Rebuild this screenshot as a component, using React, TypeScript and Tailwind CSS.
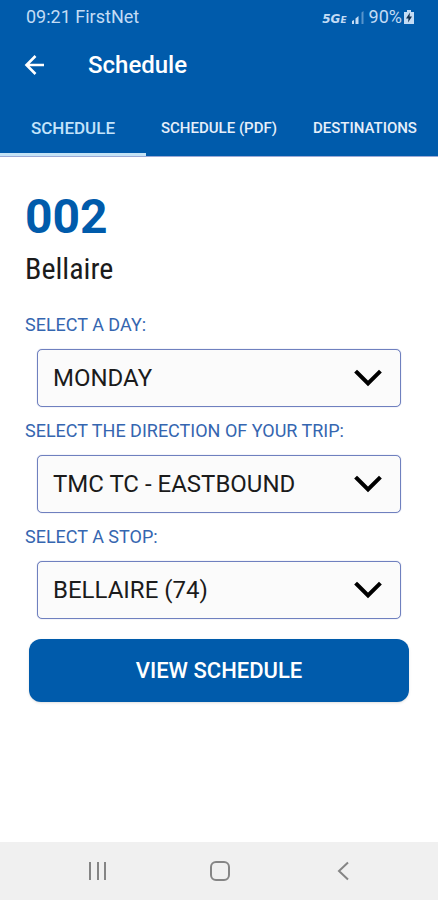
import React, { useState } from "react";

type Option = { value: string; label: string };

const TABS = [
  { id: "schedule", label: "SCHEDULE", className: "w-1/3 text-[17px]" },
  { id: "pdf", label: "SCHEDULE (PDF)", className: "w-1/3 text-[15px]" },
  { id: "destinations", label: "DESTINATIONS", className: "w-1/3 text-[15px]" },
];

const DAYS: Option[] = [{ value: "mon", label: "MONDAY" }];
const DIRECTIONS: Option[] = [{ value: "east", label: "TMC TC - EASTBOUND" }];
const STOPS: Option[] = [{ value: "74", label: "BELLAIRE (74)" }];

const StatusBar: React.FC = () => (
  <div className="flex h-[34px] items-center justify-between pl-[26px] pr-6 text-lg text-[#c3dcf5]">
    <span>09:21 FirstNet</span>
    <div className="flex items-center">
      <div className="mt-1 flex items-baseline font-['DejaVu_Sans',sans-serif] font-bold italic leading-4">
        <span className="text-xs">5G</span>
        <span className="text-[9px]">E</span>
      </div>
      <svg className="ml-1 h-4 w-[14px]" viewBox="0 0 14 16" fill="currentColor" aria-hidden="true">
        <path d="M1 15v-3l2-1v4zM4.500 15V9.500l3-2.500v8z" />
        <path d="M10.500 15V3.500L12.500 2v13z" opacity="0.45" />
      </svg>
      <span className="ml-1">90%</span>
      <svg className="ml-0.5 h-4 w-[10px]" viewBox="0 0 10 16" aria-hidden="true">
        <path d="M3 1h4v2h3v12H0V3h3z" fill="currentColor" />
        <path d="M6 3.500 2 9.500h2.500L4 13.500l4-6H5.500z" fill="#12304f" />
      </svg>
    </div>
  </div>
);

const Tabs: React.FC<{ active: string; onSelect: (id: string) => void }> = ({ active, onSelect }) => (
  <div role="tablist" className="flex h-[60px]">
    {TABS.map((t) => (
      <button
        key={t.id}
        role="tab"
        aria-selected={t.id === active}
        onClick={() => onSelect(t.id)}
        className={`${t.className} whitespace-nowrap border-b-[3px] pt-2 font-medium ${
          t.id === active ? "border-[#c5e3f6] text-[#c3e4fb]" : "border-transparent text-[#e6effa]"
        }`}
      >
        {t.label}
      </button>
    ))}
  </div>
);

type FieldProps = { id: string; label: string; options: Option[] };

const SelectField: React.FC<FieldProps> = ({ id, label, options }) => (
  <div className="flex flex-col gap-[10px]">
    <label htmlFor={id} className="text-lg leading-7 text-[#3566b0]">
      {label}
    </label>
    <div className="relative mx-3">
      <select
        id={id}
        className="h-[58px] w-full appearance-none rounded-[5px] border border-[#6f80bf] bg-[#fbfbfb] pl-[15px] pr-14 text-2xl text-[#1b1b1b] shadow-[0_0_1px_#8c98c8]"
      >
        {options.map((o) => (
          <option key={o.value} value={o.value}>
            {o.label}
          </option>
        ))}
      </select>
      <svg
        className="pointer-events-none absolute right-[18px] top-5 h-[18px] w-[30px]"
        viewBox="0 0 30 18"
        fill="none"
        stroke="#000"
        strokeWidth="4"
        aria-hidden="true"
      >
        <path d="M4 3.500 15 14.500 26 3.500" strokeLinecap="square" />
      </svg>
    </div>
  </div>
);

const NavBar: React.FC = () => (
  <nav className="flex h-[58px] items-center justify-between bg-[#f0f0f0] pl-[86px] pr-[83px] text-[#858585]">
    <button aria-label="Recent apps">
      <svg className="h-6 w-6" viewBox="0 0 24 24" stroke="currentColor" strokeWidth="2" fill="none">
        <path d="M4 3v18M12 3v18M19 3v18" />
      </svg>
    </button>
    <button aria-label="Home">
      <svg className="h-6 w-6" viewBox="0 0 24 24" stroke="currentColor" strokeWidth="2" fill="none">
        <rect x="2" y="3" width="18" height="18" rx="5" />
      </svg>
    </button>
    <button aria-label="Back">
      <svg className="h-6 w-6" viewBox="0 0 24 24" stroke="currentColor" strokeWidth="2" fill="none">
        <path d="M17 3.500 8 12l9 8.500" />
      </svg>
    </button>
  </nav>
);

const App: React.FC = () => {
  const [tab, setTab] = useState("schedule");

  return (
    <div className="flex min-h-screen flex-col bg-white font-[Roboto,sans-serif]">
      <header className="border-b border-[#9aa9d6] bg-[#005bab]">
        <StatusBar />
        <div className="flex h-[62px] items-center gap-10 px-6 text-white">
          <button aria-label="Go back">
            <svg className="h-6 w-6" viewBox="0 0 24 24" stroke="currentColor" strokeWidth="2.600" fill="none">
              <path d="M20 12H3M11.500 3l-9 9 9 9" />
            </svg>
          </button>
          <h1 className="text-2xl font-medium">Schedule</h1>
        </div>
        <Tabs active={tab} onSelect={setTab} />
      </header>

      <main className="flex-1 px-[25px] pt-8">
        <h2 className="text-5xl font-bold leading-[56px] text-[#005bab]">002</h2>
        <p className="font-['Roboto_Condensed',Roboto,sans-serif] text-3xl leading-[48px] text-[#1b1b1b]">Bellaire</p>

        <form className="mt-[18px] flex flex-col gap-[10px]" onSubmit={(e) => e.preventDefault()}>
          <SelectField id="day" label="SELECT A DAY:" options={DAYS} />
          <SelectField id="direction" label="SELECT THE DIRECTION OF YOUR TRIP:" options={DIRECTIONS} />
          <SelectField id="stop" label="SELECT A STOP:" options={STOPS} />
          <button
            type="submit"
            className="mx-1 mt-[10px] h-[63px] rounded-xl bg-[#005bab] text-[22px] font-medium text-white shadow"
          >
            VIEW SCHEDULE
          </button>
        </form>
      </main>

      <NavBar />
    </div>
  );
};

export default App;
